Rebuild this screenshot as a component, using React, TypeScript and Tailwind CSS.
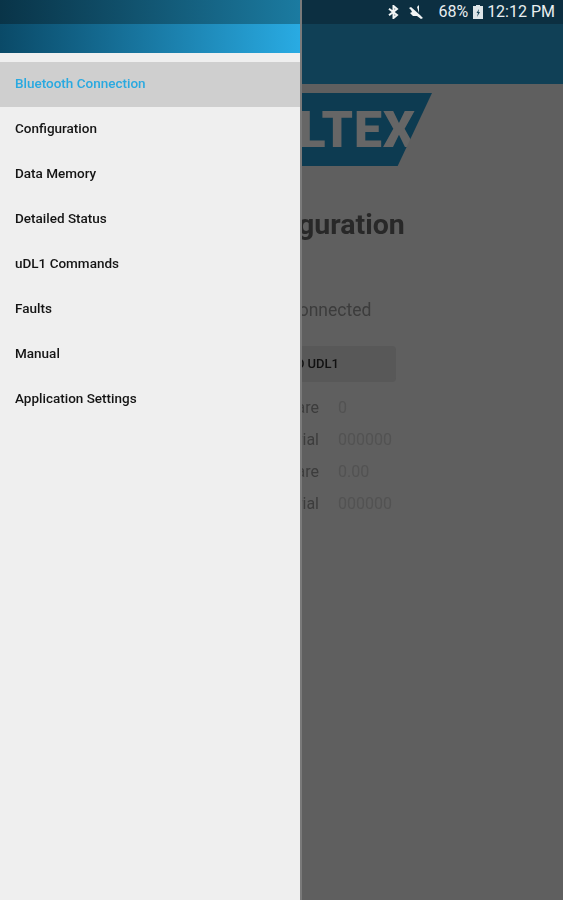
const items = [
  "Bluetooth Connection",
  "Configuration",
  "Data Memory",
  "Detailed Status",
  "uDL1 Commands",
  "Faults",
  "Manual",
  "Application Settings",
];

const rows = [
  ["Firmware", "0"],
  ["Serial", "000000"],
  ["Firmware", "0.00"],
  ["Serial", "000000"],
];

function StatusIcons() {
  return (
    <div className="flex items-center h-6 pr-2 text-[#e9eef0] text-[16px] font-['Roboto',sans-serif]">
      <svg width="11" height="14" viewBox="0 0 11 14" className="mr-[10px]">
        <path d="M1 3.8l8 6.2-3.5 3V1L9 4 1 10.2" fill="none" stroke="#f2f5f6" strokeWidth="2" />
      </svg>
      <svg width="15" height="14" viewBox="0 0 15 14" className="mr-[14px]">
        <path d="M0 3l2-1 9 8 3 3-2 1-4-3-4 0-3-3 2-1-1-2zM8 2l2-2v8z" fill="#f2f5f6" />
      </svg>
      <span>68%</span>
      <svg width="10" height="14" viewBox="0 0 10 14" className="ml-[5px] mr-[4px]">
        <path d="M3 0h4v1h3v13H0V1h3z" fill="#dfe5e8" />
        <path d="M6 4L3.5 8H5l-1 4 3-5H5.5z" fill="#1a4457" />
      </svg>
      <span>12:12 PM</span>
    </div>
  );
}

export default function App() {
  return (
    <div className="relative w-[563px] h-[900px] overflow-hidden bg-[#5f5f5f] font-['Roboto',sans-serif]">
      <header>
        <div className="flex justify-end h-6 bg-[#0c2f41]">
          <StatusIcons />
        </div>
        <div className="h-[60px] bg-[#104056]" />
      </header>

      <main className="pl-[120px] [filter:blur(0.4px)]">
        <div className="mt-[9px] flex h-[73px]">
          <div className="flex items-center justify-end w-[312px] h-full bg-[#0d3b51] pr-[16px] [clip-path:polygon(0_0,100%_0,89%_100%,0_100%)]">
            <span className="text-[50px] font-black tracking-[1px] text-[#666666] leading-none">VOLTEX</span>
          </div>
        </div>
        <h1 className="mt-[41px] ml-[110px] text-[28.5px] leading-[36px] font-bold text-[#282828]">Configuration</h1>
        <p className="mt-[55px] ml-[137px] text-[17.5px] leading-[24px] text-[#3c3c3c]">Not connected</p>
        <div className="mt-[24px] ml-[100px] flex items-center justify-end w-[176px] h-9 rounded-sm bg-[#585858] pr-[57px]">
          <span className="whitespace-nowrap text-[13px] font-medium text-[#111111]">CONNECT TO UDL1</span>
        </div>
        <div className="mt-[10px] grid grid-cols-[199px_auto] justify-start gap-x-[19px]">
          {rows.map(([label, value], i) => (
            <div key={i} className="contents">
              <span className="h-8 text-right text-[16px] leading-[32px] text-[#3c3c3c]">{label}</span>
              <span className="h-8 text-[16px] leading-[32px] text-[#525252]">{value}</span>
            </div>
          ))}
        </div>
      </main>

      <aside className="absolute left-0 top-0 bottom-0 w-[302px] border-r-2 border-[#7a7a7a] bg-[#efefef]">
        <div className="h-6 bg-gradient-to-r from-[#093448] to-[#1b7ba1]" />
        <div className="h-[29px] bg-gradient-to-r from-[#0a4a68] to-[#29abe3]" />
        <nav className="pt-[9px]">
          {items.map((item, i) => (
            <div
              key={item}
              className={
                "flex items-center h-[45px] pb-[3px] pl-[15px] text-[13.5px] font-medium " +
                (i === 0 ? "h-[44px] bg-[#cfcfcf] text-[#29a9e0]" : "text-[#141414]")
              }
            >
              <span className="[filter:blur(0.4px)]">{item}</span>
            </div>
          ))}
        </nav>
      </aside>
    </div>
  );
}
